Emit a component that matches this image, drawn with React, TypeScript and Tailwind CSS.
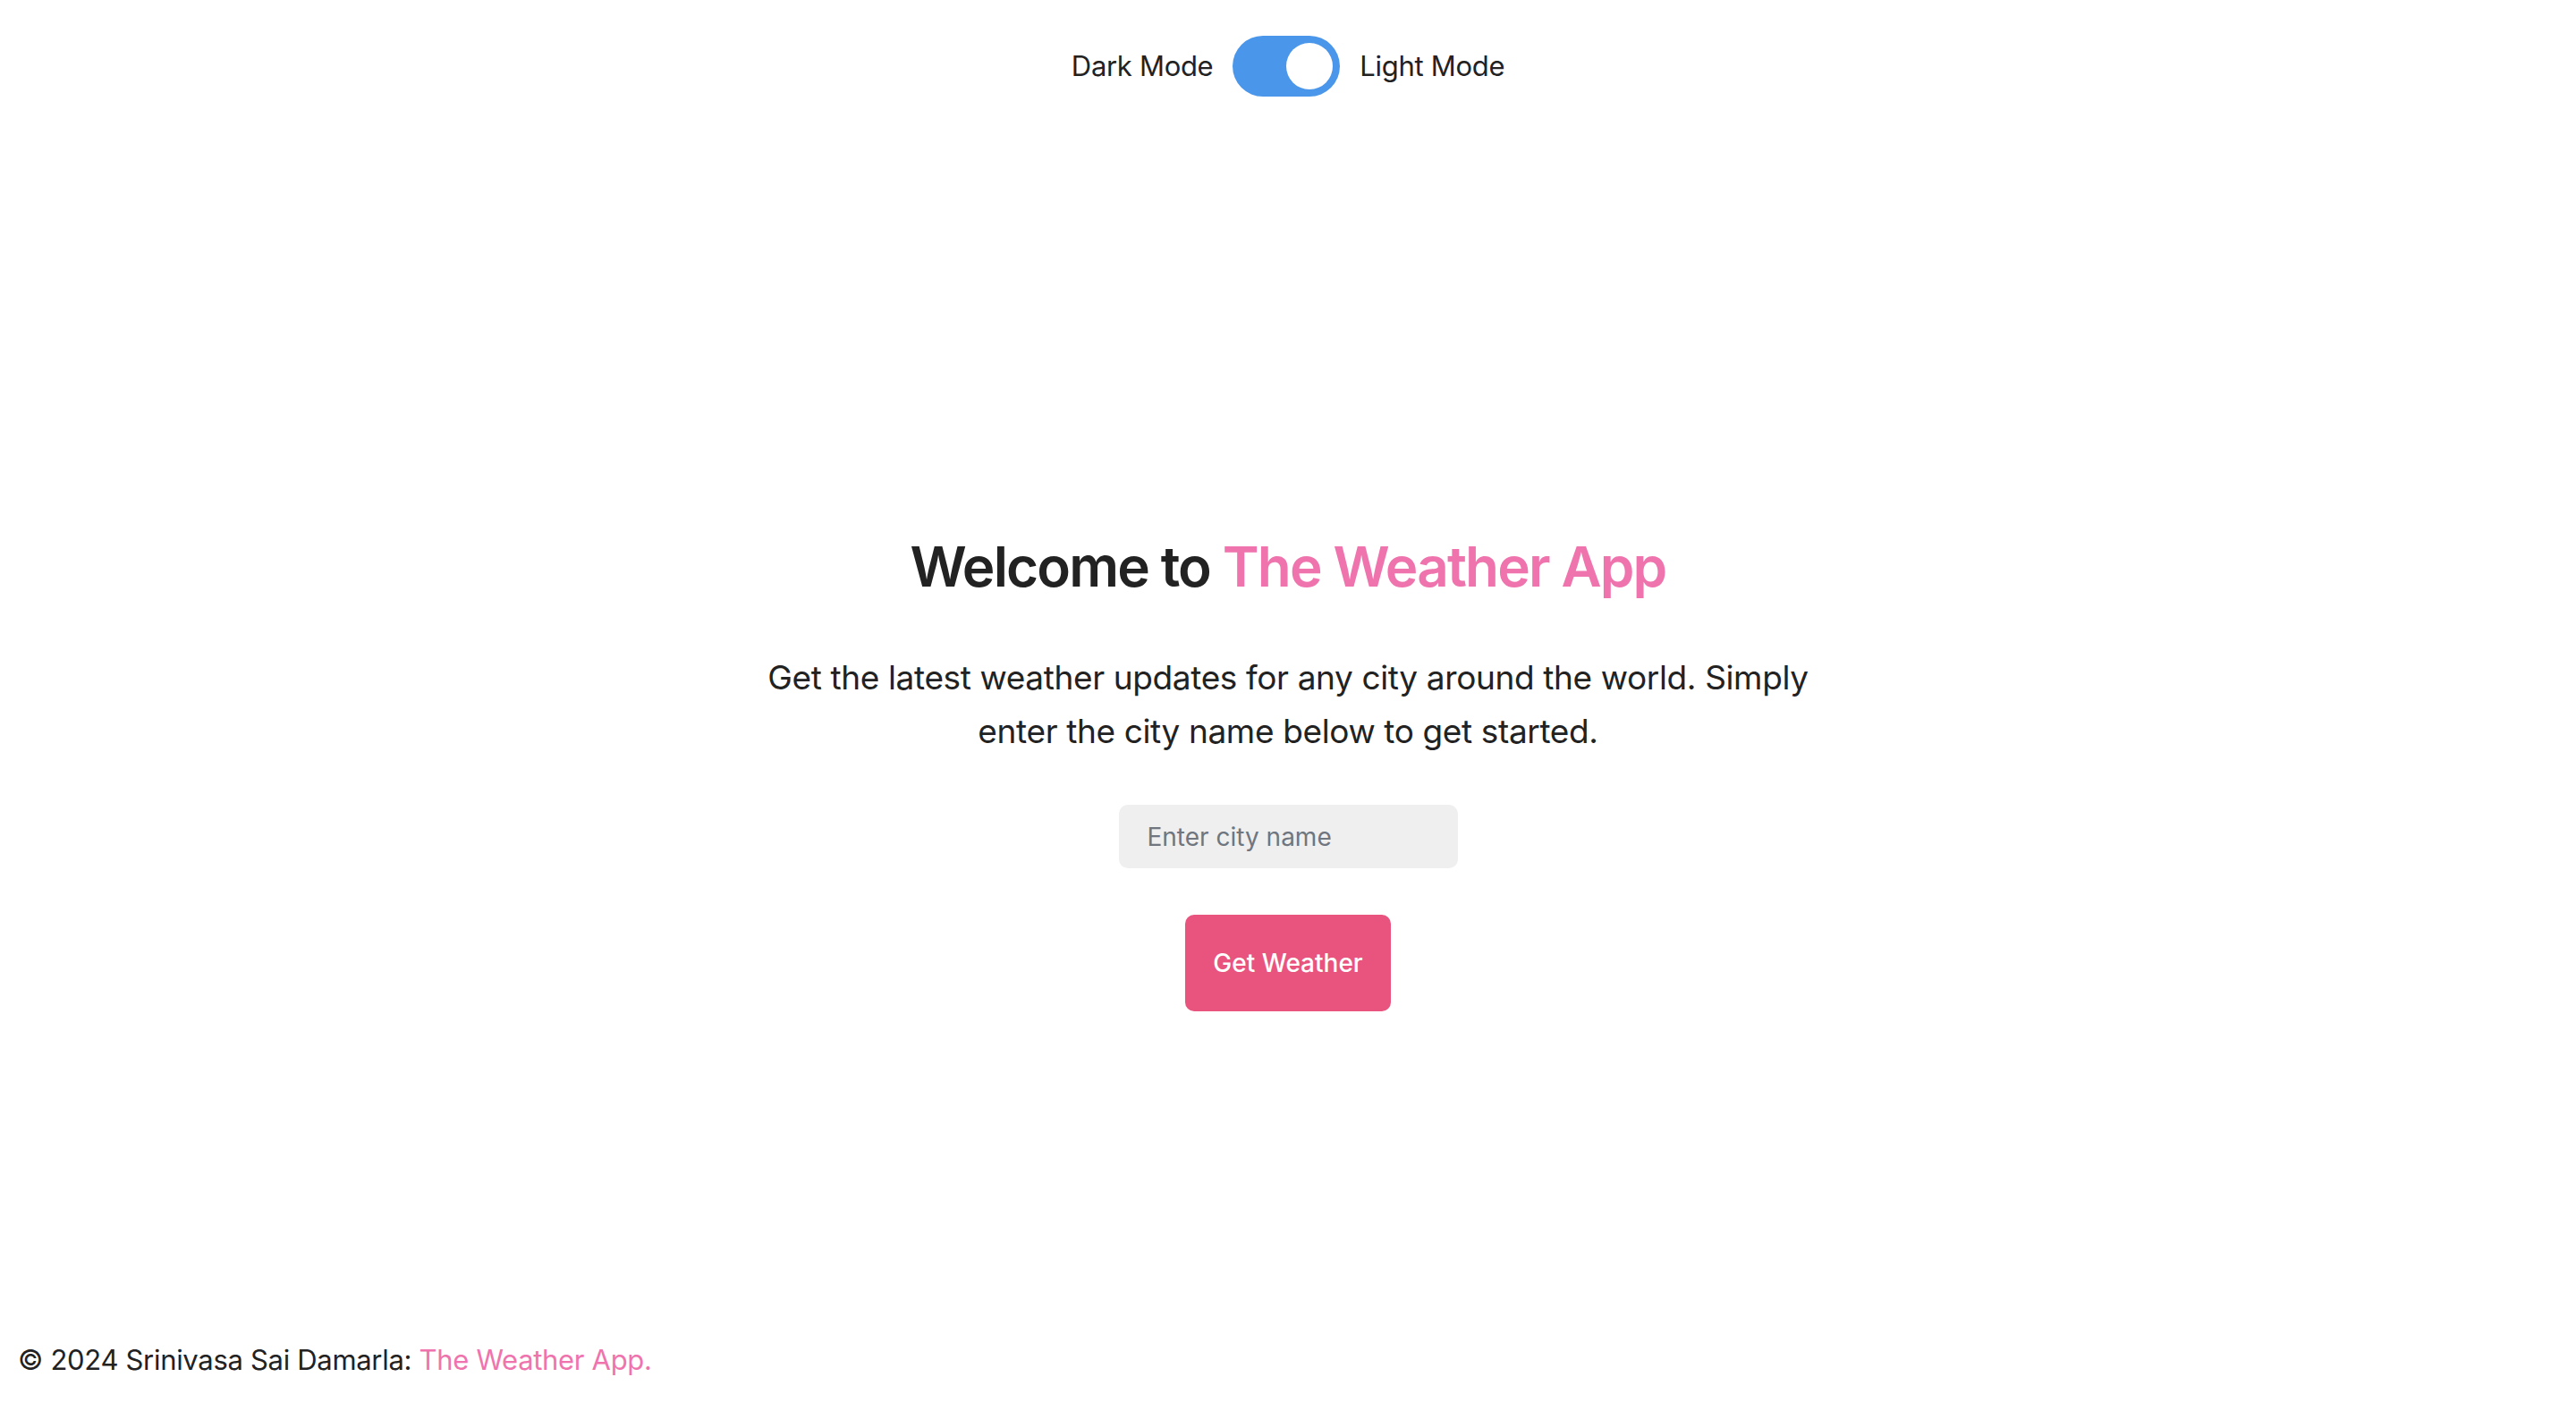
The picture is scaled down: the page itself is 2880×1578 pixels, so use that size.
import React, { useState } from "react";

export default function App() {
  const [light, setLight] = useState(true);
  const [city, setCity] = useState("");
  return (
    <div
      className="flex min-h-screen flex-col bg-white text-[#222222]"
      style={{ fontFamily: "Inter, 'Liberation Sans', sans-serif" }}
    >
      <header className="flex items-center justify-center gap-[22px] pt-[40px]">
        <span className="text-[31px] leading-[68px] tracking-[-0.01em]">Dark Mode</span>
        <button
          onClick={() => setLight(!light)}
          className="relative h-[68px] w-[120px] rounded-full bg-[#4a96ea]"
          aria-label="toggle theme"
        >
          <span className="absolute right-[8px] top-[8px] h-[52px] w-[52px] rounded-full bg-white" />
        </button>
        <span className="text-[31px] leading-[68px] tracking-[-0.01em]">Light Mode</span>
      </header>

      <main className="flex flex-1 flex-col items-center pt-[488px]">
        <h1 className="text-[62px] font-semibold leading-[76px] tracking-[-0.03em]">
          Welcome to <span className="text-[#ef74ae]">The Weather App</span>
        </h1>
        <p className="mt-[56px] max-w-[1200px] text-center text-[37px] leading-[60px] tracking-[-0.01em]">
          Get the latest weather updates for any city around the world. Simply
          enter the city name below to get started.
        </p>
        <input
          value={city}
          onChange={(e) => setCity(e.target.value)}
          placeholder="Enter city name"
          className="mt-[52px] h-[71px] w-[379px] rounded-[10px] bg-[#efefef] px-[32px] text-[28px] text-[#222] outline-none placeholder:text-[#6f7680]"
        />
        <button className="mt-[52px] h-[108px] w-[230px] rounded-[10px] bg-[#e9547f] text-[28px] font-medium text-white">
          Get Weather
        </button>
      </main>

      <footer className="px-[20px] pb-[33px] text-[31px] leading-[48px] tracking-[-0.01em]">
        © 2024 Srinivasa Sai Damarla: <span className="text-[#ef74ae]">The Weather App.</span>
      </footer>
    </div>
  );
}
